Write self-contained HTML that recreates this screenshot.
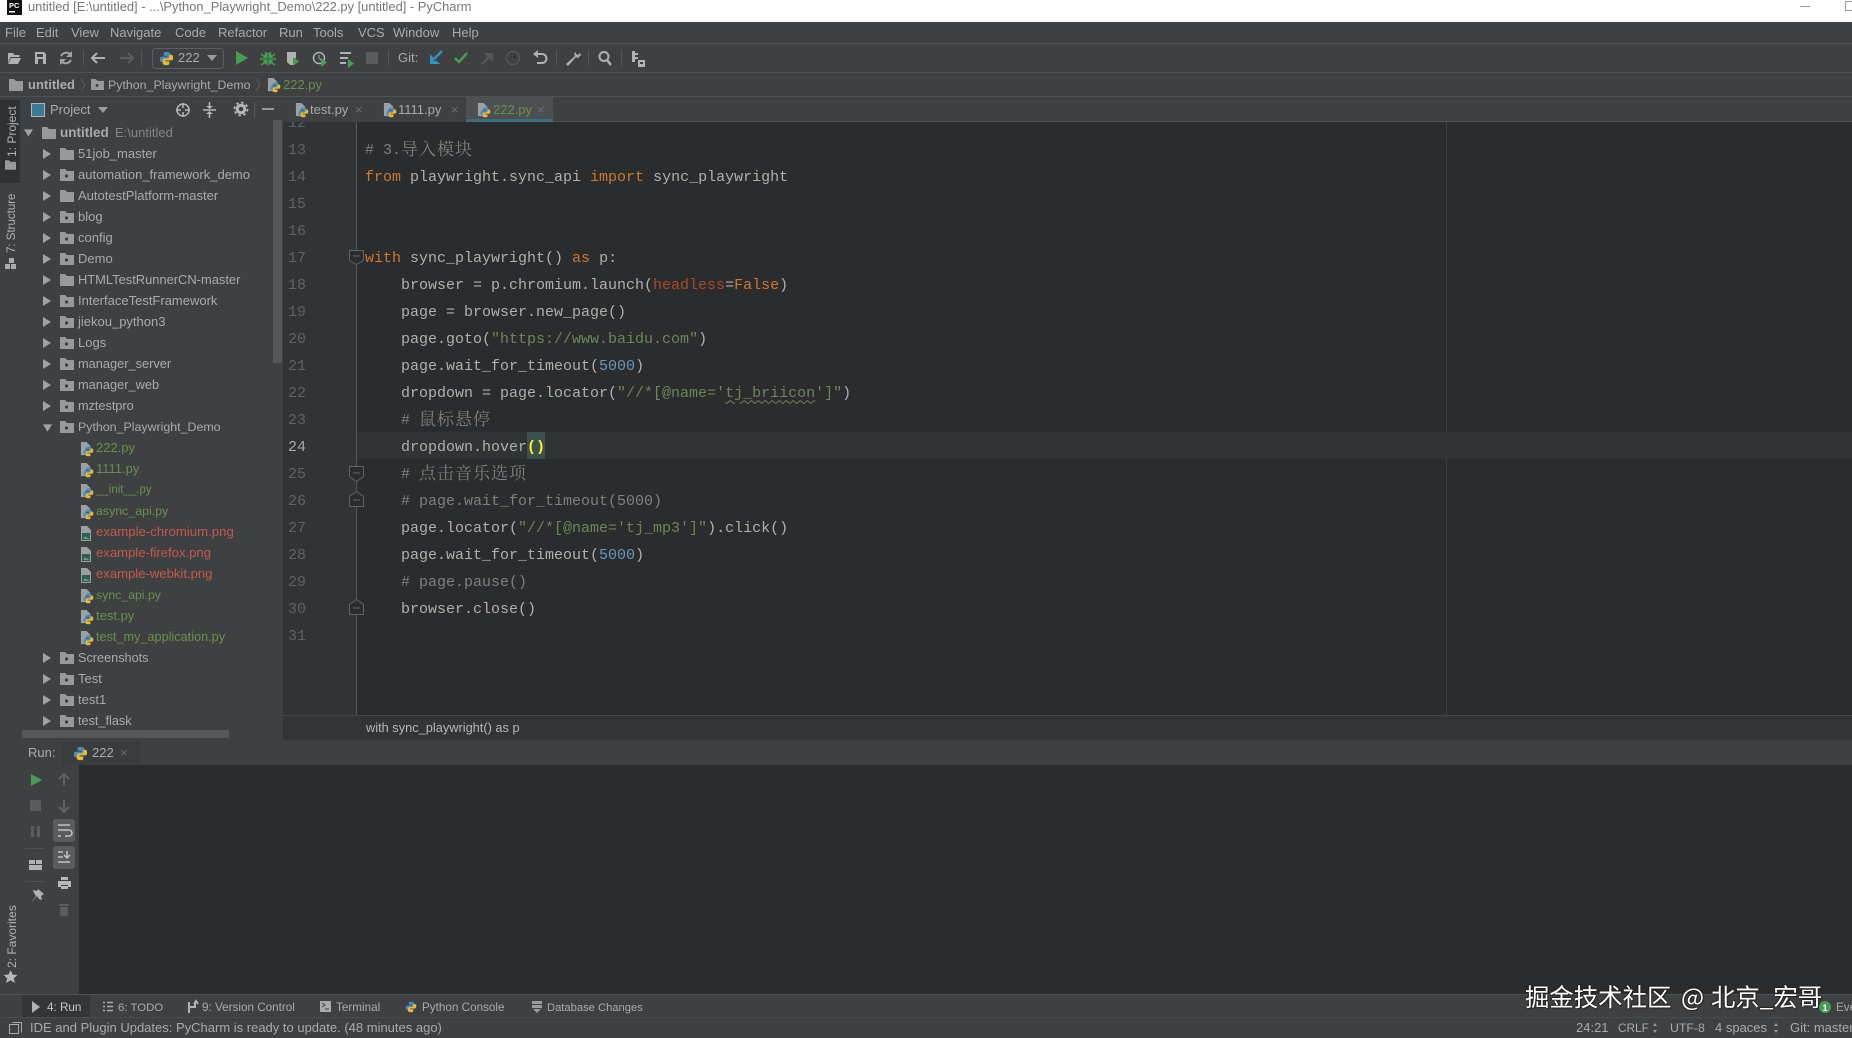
<!DOCTYPE html>
<html><head><meta charset="utf-8"><title>PyCharm</title>
<style>
html,body{margin:0;padding:0;width:1852px;height:1038px;overflow:hidden;background:#3e4042}
body{position:relative;font-family:"Liberation Sans","Noto Sans CJK SC",sans-serif;font-size:13px;color:#a8abae}
#w{position:absolute;left:0;top:0;width:1852px;height:1038px;filter:blur(.35px)}
.a,.t{position:absolute}
.t{white-space:pre;line-height:20px;height:20px}
.g{color:#6a8f4f}.r{color:#c4594f}
.v{transform-origin:0 0;transform:rotate(-90deg);color:#b0b2b4;font-size:12px}
.b .t{font-size:11.7px;top:998px}
pre{position:absolute;margin:0;font:15px/27px "Liberation Mono",monospace;white-space:pre}
.k{color:#cc7832}.c{color:#7d7f80}.s{color:#6a8759}.n{color:#6897bb}.p{color:#aa4926}.y{color:#ffef28;font-weight:bold}
z{font:17px "Noto Serif CJK SC",serif;letter-spacing:1px;line-height:0;position:relative;top:1px}
u{text-decoration:underline wavy #6a8759 1px;text-underline-offset:3px}
.w{font:24.4px/30px 'Noto Sans CJK SC','Liberation Sans',sans-serif;height:30px;top:982px;color:#fff;text-shadow:1px 1px 1px #222,-1px 0 1px #222,0 -1px 1px #222}
</style></head><body><div id="w">
<svg width="0" height="0" style="position:absolute"><defs>
<symbol id="py" viewBox="0 0 16 16"><path fill="#4b8bbe" d="M8 1C5 1 5 2 5 3v2h4v1H3C1 6 1 8 1 9s0 3 2 3h2v-2c0-1 1-2 2-2h3c1 0 2-1 2-2V3c0-1-1-2-4-2z"/><path fill="#e8b93a" d="M8 15c3 0 3-1 3-2v-2H7v-1h6c2 0 2-2 2-3s0-3-2-3h-2v2c0 1-1 2-2 2H6c-1 0-2 1-2 2v3c0 1 1 2 4 2z"/></symbol>
<symbol id="pf" viewBox="0 0 15 17"><path fill="#9aa0a5" d="M1 1h6l4 4v3H6v7H1z"/><use href="#py" x="3" y="5" width="12" height="12"/></symbol>
<symbol id="im" viewBox="0 0 14 17"><path fill="#9aa0a5" d="M1 1h6l4 4v2H1z"/><rect x="1.5" y="7.5" width="9" height="8" fill="#2f5d50" stroke="#9aa0a5"/><path fill="#5fa07f" d="M3 14l2-3 2 2 1-1 1 2z"/></symbol>
<symbol id="fo" viewBox="0 0 14 12"><path fill="#97999b" d="M0 0h5l2 2h7v10H0z"/></symbol>
<symbol id="fd" viewBox="0 0 14 12"><path fill="#97999b" d="M0 0h5l2 2h7v10H0z"/><circle cx="6.5" cy="7" r="1.6" fill="#3c3f41"/></symbol>
<symbol id="ar" viewBox="0 0 8 10"><path fill="#a0a2a4" d="M0 0l8 5-8 5z"/></symbol>
<symbol id="ad" viewBox="0 0 10 8"><path fill="#a0a2a4" d="M0 0h10L5 8z"/></symbol>
</defs></svg>

<!-- regions -->
<div class="a" style="left:0;top:0;width:1852px;height:22px;background:#fff"></div>
<div class="a" style="left:0;top:43px;width:1852px;height:1px;background:#4f5153"></div>
<div class="a" style="left:0;top:72px;width:1852px;height:1px;background:#4f5153"></div>
<div class="a" style="left:0;top:96px;width:1852px;height:1px;background:#4f5153"></div>
<div class="a" style="left:0;top:100px;width:20px;height:83px;background:#2f3133"></div>
<div class="a" style="left:466px;top:97px;width:87px;height:23px;background:#4d5052"></div>
<div class="a" style="left:466px;top:119px;width:87px;height:3px;background:#3f6c7e"></div>
<div class="a" style="left:553px;top:121px;width:1299px;height:1px;background:#4f5153"></div>
<!-- editor -->
<div class="a" style="left:283px;top:122px;width:1569px;height:593px;background:#2b2c2d;overflow:hidden">
 <div class="a" style="left:0;top:0;width:73px;height:593px;background:#313335"></div>
 <div class="a" style="left:73px;top:0;width:1px;height:593px;background:#55585a"></div>
 <div class="a" style="left:1163px;top:0;width:1px;height:593px;background:#3d3f41"></div>
 <div class="a" style="left:74px;top:310px;width:1495px;height:27px;background:#323334"></div>
 <div class="a" style="left:244px;top:310px;width:18px;height:27px;background:#3b514d"></div>
 <pre style="left:5px;top:-12.5px;color:#606366">12
13
14
15
16
17
18
19
20
21
22
23
<span style="color:#a8a9aa">24</span>
25
26
27
28
29
30
31</pre>
 <pre style="left:82px;top:-12.5px;color:#aeb0b1">

<span class="c"># 3.<z>导入模块</z></span>
<span class="k">from</span> playwright.sync_api <span class="k">import</span> sync_playwright


<span class="k">with</span> sync_playwright() <span class="k">as</span> p:
    browser = p.chromium.launch(<span class="p">headless</span>=<span class="k">False</span>)
    page = browser.new_page()
    page.goto(<span class="s">"https://www.baidu.com"</span>)
    page.wait_for_timeout(<span class="n">5000</span>)
    dropdown = page.locator(<span class="s">"//*[@name='<u>tj_briicon</u>']"</span>)
    <span class="c"># <z>鼠标悬停</z></span>
    dropdown.hover<span class="y">()</span>
    <span class="c"># <z>点击音乐选项</z></span>
    <span class="c"># page.wait_for_timeout(5000)</span>
    page.locator(<span class="s">"//*[@name='tj_mp3']"</span>).click()
    page.wait_for_timeout(<span class="n">5000</span>)
    <span class="c"># page.pause()</span>
    browser.close()
</pre>
</div>
<div class="a" style="left:283px;top:715px;width:1569px;height:1px;background:#454749"></div>
<div class="a" style="left:283px;top:716px;width:1569px;height:24px;background:#323435"></div>
<!-- console -->
<div class="a" style="left:79px;top:765px;width:1773px;height:229px;background:#2b2c2d"></div>
<div class="a" style="left:0;top:994px;width:1852px;height:1px;background:#4f5153"></div>
<div class="a" style="left:22px;top:995px;width:68px;height:22px;background:#333537"></div>
<div class="a" style="left:0;top:1017px;width:1852px;height:1px;background:#4a4c4e"></div>
<div class="a" style="left:273px;top:120px;width:9px;height:243px;background:#55585a"></div>
<div class="a" style="left:22px;top:730px;width:207px;height:8px;background:#55575a"></div>
<div class="a" style="left:62px;top:741px;width:78px;height:24px;background:#3a3c3e"></div>

<!-- shapes & icons -->
<svg class="a" style="left:0;top:0" width="1852" height="1038" viewBox="0 0 1852 1038">
<rect x="7" y="0" width="15" height="15" fill="#111"/><rect x="9" y="11" width="6" height="1.5" fill="#fff"/>
<text x="9" y="8" font-size="7.5" font-weight="bold" fill="#fff" font-family="Liberation Sans">PC</text>
<path stroke="#999" stroke-width="1" d="M1800 6.5h10"/><rect x="1845.5" y="1.5" width="9" height="9" fill="none" stroke="#999"/>
<path stroke="#545658" d="M83.5 50v16M141.5 50v16M388.5 50v16M556.5 50v16M588.5 50v16M621.5 50v16M254.5 102v16"/>
<path fill="#afb1b3" d="M8 53h5l1.500 2h5v2H10.500L8 63zM11 58h10l-3 6H8z"/>
<path fill="#afb1b3" fill-rule="evenodd" d="M35 52h9l2 2v10H35zM37 54v3h6v-3zM38 59v5h5v-5z"/>
<path fill="none" stroke="#9fa1a3" stroke-width="2" d="M71 55a6 6 0 0 0-10 1M61 61a6 6 0 0 0 10-1"/><path fill="#9fa1a3" d="M72 51v6h-6zM60 65v-6h6z"/>
<path fill="none" stroke="#afb1b3" stroke-width="2" d="M105 58H92M97 53l-5 5 5 5"/>
<path fill="none" stroke="#5c5f61" stroke-width="2" d="M120 58h13M128 53l5 5-5 5"/>
<rect x="152.500" y="48.500" width="71" height="20" rx="3" fill="none" stroke="#5c5e60"/>
<use href="#py" x="159" y="51" width="15" height="15"/>
<path fill="#9a9c9e" d="M207 55h10l-5 6z"/>
<path fill="#499c54" d="M236 51l12 7-12 7z"/>
<ellipse cx="268" cy="59" rx="5" ry="6" fill="#499c54"/><path stroke="#499c54" stroke-width="1.500" d="M261 54l3 2M275 54l-3 2M260 59h3M273 59h3M261 65l3-2M275 65l-3-2M265 52l2 2M271 52l-2 2"/><path stroke="#2b5d32" d="M263 59h10M268 54v11"/>
<path fill="#afb1b3" d="M287 52h9v6l-3 2v5l-3 0-3-3z"/><path fill="#499c54" d="M293 57l6 4.500-6 4.500z"/>
<circle cx="319" cy="58" r="5.500" fill="none" stroke="#afb1b3" stroke-width="1.500"/><path stroke="#afb1b3" d="M319 55v3l2 2"/><path fill="#499c54" d="M321 58l6 4.500-6 4.500z"/>
<path stroke="#afb1b3" stroke-width="2" d="M340 53h11M340 58h8M340 63h6"/><path fill="#499c54" d="M348 59l6 4.500-6 4.500z"/>
<rect x="366" y="52" width="12" height="12" fill="#5a5c5e"/>
<path stroke="#3592c4" stroke-width="2.500" fill="none" d="M442 51l-9 9"/><path fill="#3592c4" d="M430 54v10h10l-3-3h-4v-4z"/>
<path fill="none" stroke="#499c54" stroke-width="2.500" d="M455 58l4 4 8-9"/>
<path stroke="#55585a" stroke-width="2.500" fill="none" d="M482 64l9-9"/><path fill="#55585a" d="M484 53h9v9l-3-3-3-3z"/>
<circle cx="513" cy="58" r="6.500" fill="none" stroke="#55585a" stroke-width="1.500"/><path stroke="#55585a" d="M513 54v4l3 2"/>
<path fill="none" stroke="#afb1b3" stroke-width="2" d="M536 54h6a4.500 4.500 0 0 1 0 9h-5"/><path fill="#afb1b3" d="M538 50v8l-5-4z"/>
<path fill="#afb1b3" d="M577 51l-3 3 1 2-9 8 2 2 8-9 2 1 3-3-1-2-2 2-2-1 0-2 2-2z"/>
<circle cx="604" cy="56.500" r="4.500" fill="none" stroke="#afb1b3" stroke-width="2"/><path stroke="#afb1b3" stroke-width="2.500" d="M607 60l4 5"/>
<path fill="#afb1b3" d="M632 51h3v2h3v2h-3v2h3v2h-3v3h-3z"/><rect x="638" y="60" width="7" height="7" fill="#afb1b3"/><rect x="640" y="62" width="3" height="2" fill="#3e4042"/>
<use href="#fo" x="9" y="79" width="14" height="12"/>
<path fill="none" stroke="#5a5c5e" d="M81 79l4 6-4 6M256 79l4 6-4 6"/>
<use href="#fd" x="91" y="79" width="13" height="11"/>
<use href="#pf" x="267" y="77" width="14" height="16"/>
<rect x="31.500" y="103.500" width="13" height="13" fill="#3a7a96" stroke="#b0b2b4"/><path fill="#9a9c9e" d="M98 107h10l-5 6z"/>
<circle cx="183" cy="110" r="6" fill="none" stroke="#b5b7b9" stroke-width="1.500"/><path stroke="#b5b7b9" stroke-width="1.500" d="M183 103v5M183 112v5M176 110h5M185 110h5"/>
<path stroke="#b5b7b9" stroke-width="1.500" fill="none" d="M203 110h13M209.500 102v5M209.500 113v5"/><path fill="#b5b7b9" d="M206 106h7l-3.500 3zM206 114h7l-3.500-3z"/>
<circle cx="241" cy="109" r="3.800" fill="none" stroke="#b5b7b9" stroke-width="3"/><circle cx="241" cy="109" r="6.500" fill="none" stroke="#b5b7b9" stroke-width="1.800" stroke-dasharray="2.500 2.600"/>
<path stroke="#b5b7b9" stroke-width="1.500" d="M262 109h12"/>
<use href="#pf" x="295" y="102" width="14" height="16"/><use href="#pf" x="383" y="102" width="14" height="16"/><use href="#pf" x="477" y="102" width="14" height="16"/>
<use href="#fo" x="5" y="160" width="11" height="10"/>
<path fill="#a8aaac" d="M9 258h5v5H9zM5 264h5v5H5zM11 264h5v5h-5z"/>
<use href="#ad" x="24" y="129" width="9" height="8"/>
<use href="#fo" x="42" y="127" width="14" height="12"/>
<use href="#ar" x="43" y="149" width="8" height="10"/><use href="#ar" x="43" y="170" width="8" height="10"/><use href="#ar" x="43" y="191" width="8" height="10"/><use href="#ar" x="43" y="212" width="8" height="10"/><use href="#ar" x="43" y="233" width="8" height="10"/><use href="#ar" x="43" y="254" width="8" height="10"/><use href="#ar" x="43" y="275" width="8" height="10"/><use href="#ar" x="43" y="296" width="8" height="10"/><use href="#ar" x="43" y="317" width="8" height="10"/><use href="#ar" x="43" y="338" width="8" height="10"/><use href="#ar" x="43" y="359" width="8" height="10"/><use href="#ar" x="43" y="380" width="8" height="10"/><use href="#ar" x="43" y="401" width="8" height="10"/>
<use href="#ad" x="43" y="424" width="9" height="8"/>
<use href="#ar" x="43" y="653" width="8" height="10"/><use href="#ar" x="43" y="674" width="8" height="10"/><use href="#ar" x="43" y="695" width="8" height="10"/><use href="#ar" x="43" y="716" width="8" height="10"/>
<use href="#fo" x="60" y="148" width="14" height="12"/><use href="#fd" x="60" y="169" width="14" height="12"/><use href="#fo" x="60" y="190" width="14" height="12"/><use href="#fd" x="60" y="211" width="14" height="12"/><use href="#fd" x="60" y="232" width="14" height="12"/><use href="#fd" x="60" y="253" width="14" height="12"/><use href="#fo" x="60" y="274" width="14" height="12"/><use href="#fd" x="60" y="295" width="14" height="12"/><use href="#fd" x="60" y="316" width="14" height="12"/><use href="#fd" x="60" y="337" width="14" height="12"/><use href="#fd" x="60" y="358" width="14" height="12"/><use href="#fd" x="60" y="379" width="14" height="12"/><use href="#fd" x="60" y="400" width="14" height="12"/><use href="#fd" x="60" y="421" width="14" height="12"/>
<use href="#pf" x="80" y="441" width="14" height="16"/><use href="#pf" x="80" y="462" width="14" height="16"/><use href="#pf" x="80" y="483" width="14" height="16"/><use href="#pf" x="80" y="504" width="14" height="16"/>
<use href="#im" x="80" y="525" width="14" height="17"/><use href="#im" x="80" y="546" width="14" height="17"/><use href="#im" x="80" y="567" width="14" height="17"/>
<use href="#pf" x="80" y="588" width="14" height="16"/><use href="#pf" x="80" y="609" width="14" height="16"/><use href="#pf" x="80" y="630" width="14" height="16"/>
<use href="#fd" x="60" y="652" width="14" height="12"/><use href="#fd" x="60" y="673" width="14" height="12"/><use href="#fd" x="60" y="694" width="14" height="12"/><use href="#fd" x="60" y="715" width="14" height="12"/>
<g fill="#2b2c2d" stroke="#606366">
<path d="M349.500 250.500h14v10l-7 4-7-4z"/><path d="M349.500 466.500h14v10l-7 5-7-5z"/><path d="M349.500 506.500h14v-10l-7-5-7 5z"/><path d="M349.500 614.500h14v-10l-7-5-7 5z"/>
<path d="M353 256h7M353 473h7M353 500h7M353 608h7"/></g>
<use href="#py" x="73" y="746" width="15" height="15"/>
<path fill="#499c54" d="M31 774l11 6-11 6z"/>
<rect x="30" y="800" width="11" height="11" fill="#5a5c5e"/>
<path fill="#5a5c5e" d="M31 826h3v11h-3zM37 826h3v11h-3z"/>
<path stroke="#4f5153" d="M25 848.500h19M25 881.500h19"/>
<path fill="#b0b2b4" d="M29 860h6v4h-6zM36 860h6v4h-6zM29 865h13v5H29z"/>
<path fill="#b0b2b4" d="M38 889l6 5-3 2 1 4-3-1-2-3-6 7 5-7-2-3-1-3 4 1z"/>
<path stroke="#5f6163" stroke-width="2" fill="none" d="M64 786v-11M59 779l5-5 5 5M64 800v11M59 807l5 5 5-5"/>
<rect x="53" y="819" width="22" height="23" rx="3" fill="#5a5d5f"/><rect x="53" y="846" width="22" height="23" rx="3" fill="#5a5d5f"/>
<path stroke="#c0c2c4" stroke-width="1.500" fill="none" d="M58 825h12M58 830h11a2.500 2.500 0 0 1 0 6h-4M58 836h3"/>
<path stroke="#c0c2c4" stroke-width="1.500" fill="none" d="M58 852h5M58 857h5M58 862h12M67 851v7M64 855l3 3 3-3"/>
<path fill="#b5b7b9" d="M61 877h7v3h-7zM58 881h13v6h-3v-2h-7v2h-3zM61 886h7v3h-7z"/>
<path fill="#5a5c5e" d="M59 904h10v2H59zM60 907h8v9h-8z"/>
<path fill="#b5b7b9" d="M10.500 970l2 4.500 5 .5-3.700 3.200 1.200 4.800-4.500-2.600-4.500 2.600 1.200-4.800L3.500 975l5-.5z"/>
<path fill="#b0b2b4" d="M32 1001l8 6-8 6z"/>
<path stroke="#a8aaac" stroke-width="1.500" d="M103 1002.500h2M107 1002.500h6M103 1006.500h2M107 1006.500h6M103 1010.500h2M107 1010.500h6"/>
<path stroke="#b0b2b4" stroke-width="2" fill="none" d="M189 1013v-11M189 1007h6v-5M194 1004l2-3 2 3"/>
<rect x="320" y="1001" width="11" height="11" fill="#a8aaac"/><path stroke="#3e4042" fill="none" d="M322 1003l3 2-3 2M325 1009h4"/>
<use href="#py" x="405" y="1001" width="12" height="12"/>
<path fill="#9a9c9e" d="M532 1001h10v3h-10zM532 1005h10v3h-10zM533 1009h8l-4 4z"/>
<rect x="9.500" y="1024.500" width="9" height="9" fill="none" stroke="#a8aaac"/><path fill="none" stroke="#a8aaac" d="M12.500 1022.500h9v10"/>
<path d="M1653 1026l2-3 2 3zM1653 1030l2 3 2-3zM1774 1026l2-3 2 3zM1774 1030l2 3 2-3z" fill="#9a9c9e"/>
<circle cx="1825" cy="1007" r="6" fill="#499c54"/>
<text x="1822.500" y="1011" font-size="9" font-weight="bold" fill="#fff" font-family="Liberation Sans">1</text>
</svg>

<div class="t" style="left:28px;top:-3px;color:#777;font-size:12.900px">untitled [E:\untitled] - ...\Python_Playwright_Demo\222.py [untitled] - PyCharm</div>
<div class="t" style="left:5px;top:23px">File</div>
<div class="t" style="left:36px;top:23px">Edit</div>
<div class="t" style="left:71px;top:23px">View</div>
<div class="t" style="left:110px;top:23px">Navigate</div>
<div class="t" style="left:175px;top:23px">Code</div>
<div class="t" style="left:218px;top:23px">Refactor</div>
<div class="t" style="left:279px;top:23px">Run</div>
<div class="t" style="left:313px;top:23px">Tools</div>
<div class="t" style="left:358px;top:23px">VCS</div>
<div class="t" style="left:393px;top:23px">Window</div>
<div class="t" style="left:452px;top:23px">Help</div>
<div class="t" style="left:178px;top:48px">222</div>
<div class="t" style="left:398px;top:48px">Git:</div>
<div class="t" style="left:28px;top:75px;font-weight:bold">untitled</div>
<div class="t" style="left:108px;top:75px;font-size:12.400px">Python_Playwright_Demo</div>
<div class="t g" style="left:283px;top:75px">222.py</div>
<div class="t" style="left:50px;top:100px">Project</div>
<div class="t" style="left:310px;top:100px">test.py</div>
<div class="t" style="left:355px;top:100px;color:#6b6d6f">×</div>
<div class="t" style="left:398px;top:100px">1111.py</div>
<div class="t" style="left:451px;top:100px;color:#6b6d6f">×</div>
<div class="t g" style="left:493px;top:100px">222.py</div>
<div class="t" style="left:537px;top:100px;color:#6b6d6f">×</div>
<div class="t v" style="left:2px;top:157px">1: Project</div>
<div class="t v" style="left:2px;top:253px;font-size:11.500px">7: Structure</div>
<div class="t v" style="left:2px;top:968px">2: Favorites</div>

<div class="t" style="left:60px;top:123px;font-weight:bold;font-size:13.500px">untitled</div>
<div class="t" style="left:115px;top:123px;color:#85888a">E:\untitled</div>
<div>
<div class="t" style="left:78px;top:144px">51job_master</div>
<div class="t" style="left:78px;top:165px">automation_framework_demo</div>
<div class="t" style="left:78px;top:186px">AutotestPlatform-master</div>
<div class="t" style="left:78px;top:207px">blog</div>
<div class="t" style="left:78px;top:228px">config</div>
<div class="t" style="left:78px;top:249px">Demo</div>
<div class="t" style="left:78px;top:270px;font-size:12.900px">HTMLTestRunnerCN-master</div>
<div class="t" style="left:78px;top:291px">InterfaceTestFramework</div>
<div class="t" style="left:78px;top:312px">jiekou_python3</div>
<div class="t" style="left:78px;top:333px">Logs</div>
<div class="t" style="left:78px;top:354px;font-size:12.800px">manager_server</div>
<div class="t" style="left:78px;top:375px;font-size:12.800px">manager_web</div>
<div class="t" style="left:78px;top:396px;font-size:12.700px">mztestpro</div>
<div class="t" style="left:78px;top:417px;font-size:12.400px">Python_Playwright_Demo</div>
<div class="t g" style="left:96px;top:438px">222.py</div>
<div class="t g" style="left:96px;top:459px">1111.py</div>
<div class="t g" style="left:96px;top:480px;font-size:11.500px">__init__.py</div>
<div class="t g" style="left:96px;top:501px;font-size:12.400px">async_api.py</div>
<div class="t r" style="left:96px;top:522px;font-size:13.200px">example-chromium.png</div>
<div class="t r" style="left:96px;top:543px;font-size:13.100px">example-firefox.png</div>
<div class="t r" style="left:96px;top:564px;font-size:13.100px">example-webkit.png</div>
<div class="t g" style="left:96px;top:585px;font-size:12.300px">sync_api.py</div>
<div class="t g" style="left:96px;top:606px">test.py</div>
<div class="t g" style="left:96px;top:627px;font-size:12.700px">test_my_application.py</div>
<div class="t" style="left:78px;top:648px;font-size:12.700px">Screenshots</div>
<div class="t" style="left:78px;top:669px">Test</div>
<div class="t" style="left:78px;top:690px">test1</div>
<div class="t" style="left:78px;top:711px;font-size:12.700px">test_flask</div>
</div>

<div class="t" style="left:366px;top:718px;color:#b5b7b9;font-size:12.800px">with sync_playwright() as p</div>
<div class="t" style="left:28px;top:743px">Run:</div>
<div class="t" style="left:92px;top:743px">222</div>
<div class="t" style="left:120px;top:743px;color:#6b6d6f">×</div>

<div class="b">
<div class="t" style="left:47px;color:#c5c7c9">4: Run</div>
<div class="t" style="left:118px;font-size:11.400px">6: TODO</div>
<div class="t" style="left:202px">9: Version Control</div>
<div class="t" style="left:336px">Terminal</div>
<div class="t" style="left:422px">Python Console</div>
<div class="t" style="left:547px;font-size:11.200px">Database Changes</div>
<div class="t" style="left:1836px">Eve</div>
</div>

<div class="t" style="left:30px;top:1018px">IDE and Plugin Updates: PyCharm is ready to update. (48 minutes ago)</div>
<div class="t" style="left:1576px;top:1018px">24:21</div>
<div class="t" style="left:1618px;top:1018px;font-size:11.800px">CRLF</div>
<div class="t" style="left:1670px;top:1018px;font-size:12.300px">UTF-8</div>
<div class="t" style="left:1715px;top:1018px">4 spaces</div>
<div class="t" style="left:1790px;top:1018px">Git: master</div>

<div class="t w" style="left:1525px">掘金技术社区</div>
<div class="t w" style="left:1681px">@</div>
<div class="t w" style="left:1711px">北京_宏哥</div>
</div></body></html>
